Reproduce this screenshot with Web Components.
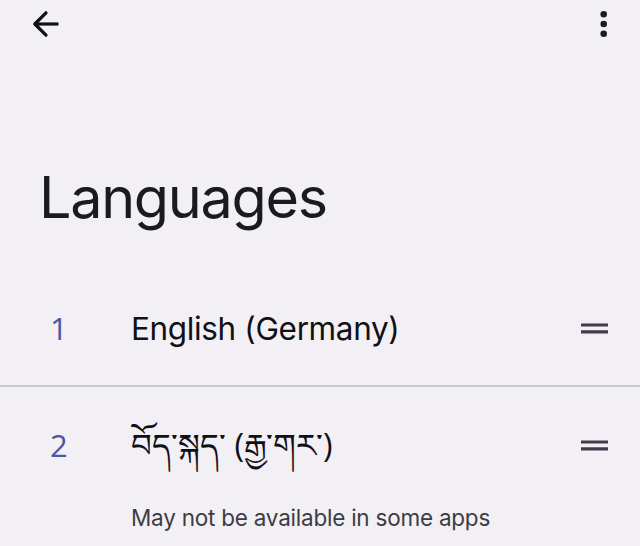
<!DOCTYPE html>
<html lang="en"><head><meta charset="utf-8"><title>Languages</title><style>body{margin:0;background:#f2f0f4}</style></head><body>
<language-settings></language-settings>
<script>
customElements.define('app-bar',class extends HTMLElement{
constructor(){super();this.attachShadow({mode:'open'}).innerHTML=`<style>
:host{display:flex;justify-content:space-between;align-items:center;height:48px;box-sizing:border-box;padding:0 32px}
svg{display:block}
</style>
<svg width="28" height="28" viewBox="0 0 28 28" fill="none" stroke="#111014" stroke-width="3.2"><path d="M26.5 14H3" /><path d="M14 2.8L2.8 14L14 25.2" stroke-linejoin="round" stroke-linecap="round"/></svg>
<svg width="8" height="28" viewBox="0 0 8 28" fill="#1b1a1f"><circle cx="3.7" cy="4.2" r="3.3"/><circle cx="3.7" cy="14" r="3.3"/><circle cx="3.7" cy="23.8" r="3.3"/></svg>`}});
customElements.define('language-row',class extends HTMLElement{
constructor(){super();this.attachShadow({mode:'open'}).innerHTML=`<style>
:host{display:grid;grid-template-columns:50px 81px 1fr auto;box-sizing:border-box;padding-right:32px;color:#111014;white-space:nowrap}
.n{grid-column:2;font-family:"Open Sans",sans-serif;font-size:31px;line-height:38px;color:#4c57a0}
.t{font-size:31.5px;line-height:40px;letter-spacing:-.36px}
:host([lang="bo"]) .t{font-family:"Open Sans",sans-serif;font-size:32.4px;line-height:36px;letter-spacing:0}
::slotted([slot=note]){display:block;font-size:22.5px;line-height:30px;color:#3d3c45;margin-top:41px;letter-spacing:-.23px}
svg{display:block;margin-top:14px}
</style><div class="n"><slot name="number"></slot></div><div><div class="t"><slot></slot></div><slot name="note"></slot></div>
<svg width="27" height="12" viewBox="0 0 27 12"><path d="M0 .4h27v3.2H0zM0 7.2h27v3.2H0z" fill="#403c4b"/></svg>`}});
customElements.define('language-settings',class extends HTMLElement{
constructor(){super();this.attachShadow({mode:'open'}).innerHTML=`<style>
:host{display:block;height:546px;overflow:hidden;font-family:Inter,sans-serif}
h1{margin:0;padding:113px 0 0 39px;font-weight:400;font-size:57.5px;line-height:72px;letter-spacing:-1.3px;color:#1b1b1f}
language-row{padding-top:76px}
language-row+language-row{border-top:2px solid #c7c5d0;padding-top:39px;margin-top:36px}
</style><app-bar></app-bar><h1>Languages</h1>
<language-row><span slot="number">1</span>English (Germany)</language-row>
<language-row lang="bo"><span slot="number">2</span>བོད་སྐད་ (རྒྱ་གར་)<span slot="note" lang="en">May not be available in some apps</span></language-row>`}});
</script></body></html>
